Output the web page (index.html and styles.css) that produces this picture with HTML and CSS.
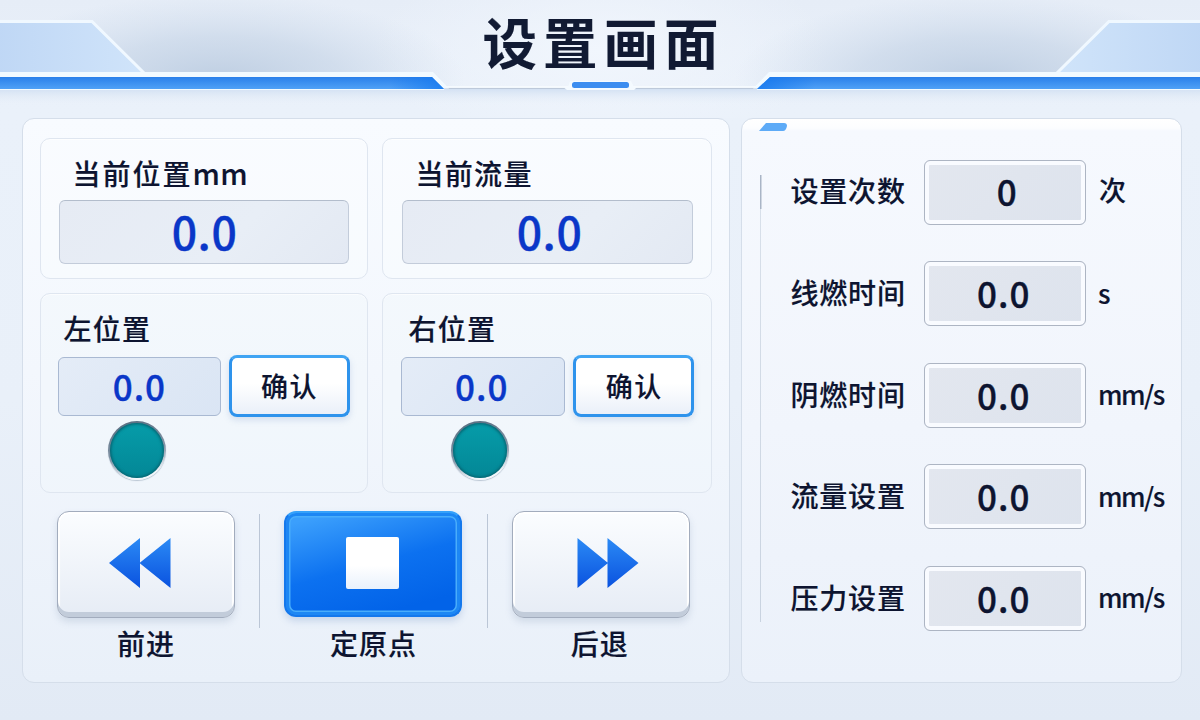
FILE: index.html
```html
<!DOCTYPE html>
<html lang="zh-CN">
<head>
  <meta charset="UTF-8" />
  <meta name="viewport" content="width=device-width, initial-scale=1.0" />
  <title>设置画面</title>
  <link rel="stylesheet" href="styles.css">
</head>
<body>
  <header class="header">
    <svg class="header-bg" viewBox="0 0 1200 118" width="1200" height="118" aria-hidden="true">
      <defs>
        <linearGradient id="bar" x1="0" y1="0" x2="0" y2="1">
          <stop offset="0" stop-color="#2a80ea" />
          <stop offset="1" stop-color="#50a1f6" />
        </linearGradient>
        <linearGradient id="tipLeft" x1="0" y1="0" x2="1" y2="0">
          <stop offset="0" stop-color="#1478ef" stop-opacity="0" />
          <stop offset="1" stop-color="#1478ef" stop-opacity="0.8" />
        </linearGradient>
        <linearGradient id="tipRight" x1="1" y1="0" x2="0" y2="0">
          <stop offset="0" stop-color="#1478ef" stop-opacity="0" />
          <stop offset="1" stop-color="#1478ef" stop-opacity="0.8" />
        </linearGradient>
        <linearGradient id="wingLeft" x1="0" y1="0" x2="1" y2="0">
          <stop offset="0" stop-color="#bfd7f5" />
          <stop offset="1" stop-color="#d0e4fa" />
        </linearGradient>
        <linearGradient id="wingRight" x1="1" y1="0" x2="0" y2="0">
          <stop offset="0" stop-color="#bfd7f5" />
          <stop offset="1" stop-color="#d0e4fa" />
        </linearGradient>
        <radialGradient id="shade">
          <stop offset="0" stop-color="#b9cadf" stop-opacity="0.9" />
          <stop offset="0.5" stop-color="#bfcfe3" stop-opacity="0.55" />
          <stop offset="1" stop-color="#c9d7e9" stop-opacity="0" />
        </radialGradient>
        <linearGradient id="drop" x1="0" y1="0" x2="0" y2="1">
          <stop offset="0" stop-color="#d3e1f3" />
          <stop offset="1" stop-color="#e9f0f9" stop-opacity="0" />
        </linearGradient>
        <clipPath id="top"><rect width="1200" height="86" /></clipPath>
      </defs>
      <g clip-path="url(#top)">
        <ellipse cx="220" cy="80" rx="245" ry="86" fill="url(#shade)" />
        <ellipse cx="980" cy="80" rx="245" ry="86" fill="url(#shade)" />
      </g>
      <rect y="89" width="1200" height="16" fill="url(#drop)" />
      <path d="M-4 21.5H92L145 74H-4Z" fill="url(#wingLeft)" stroke="#f0f8ff" stroke-width="3" />
      <path d="M1204 21.5H1109L1056 74H1204Z" fill="url(#wingRight)" stroke="#f0f8ff" stroke-width="3" />
      <path d="M440 88.300H762" stroke="#bdc9da" stroke-width="1.2" />
      <path d="M440 87H762" stroke="#f8fcff" stroke-width="1.4" />
      <path d="M0 72H433L449 88.5H444V90H0Z" fill="#f2faff" />
      <path d="M1200 72H769L753 88.5H757V90H1200Z" fill="#f2faff" />
      <path d="M0 77H432L444 89H0Z" fill="url(#bar)" />
      <path d="M1200 77H770L757 89H1200Z" fill="url(#bar)" />
      <path d="M390 77H432L444 89H390Z" fill="url(#tipLeft)" />
      <path d="M815 77H770L757 89H815Z" fill="url(#tipRight)" />
      <path d="M563 87H568L570 81H631L634 87H637L634 90H567Z" fill="#f4faff" />
      <rect x="572" y="82" width="57" height="6" rx="2.5" fill="#3c8df0" />
    </svg>
    <h1>设置画面</h1>
  </header>

  <main class="container">
    <section class="panel control-panel">
      <div class="cards">
        <div class="card readout">
          <h2>当前位置<span class="latin">mm</span></h2>
          <div class="value large">0.0</div>
        </div>
        <div class="card readout">
          <h2>当前流量</h2>
          <div class="value large">0.0</div>
        </div>
        <div class="card position">
          <h2>左位置</h2>
          <div class="position-row">
            <div class="value">0.0</div>
            <button class="confirm">确认</button>
          </div>
          <span class="lamp"></span>
        </div>
        <div class="card position">
          <h2>右位置</h2>
          <div class="position-row">
            <div class="value">0.0</div>
            <button class="confirm">确认</button>
          </div>
          <span class="lamp"></span>
        </div>
      </div>

      <div class="actions">
        <div class="action">
          <button class="key" aria-label="前进">
            <svg width="62" height="52" viewBox="0 0 62 52">
              <defs>
                <linearGradient id="arrow" x1="0" y1="0" x2="0" y2="1">
                  <stop offset="0" stop-color="#2b8af5" />
                  <stop offset="1" stop-color="#0a52df" />
                </linearGradient>
              </defs>
              <path d="M0 26L31 1V51ZM30.500 26L61.500 1V51Z" fill="url(#arrow)" />
            </svg>
          </button>
          <span>前进</span>
        </div>
        <i class="divider"></i>
        <div class="action">
          <button class="key stop" aria-label="定原点"><i class="square"></i></button>
          <span>定原点</span>
        </div>
        <i class="divider"></i>
        <div class="action">
          <button class="key" aria-label="后退">
            <svg width="62" height="52" viewBox="0 0 62 52">
              <path d="M31 26L0.500 1V51ZM61.500 26L30.500 1V51Z" fill="url(#arrow)" />
            </svg>
          </button>
          <span>后退</span>
        </div>
      </div>
    </section>

    <section class="panel settings-panel">
      <svg class="tab" width="28" height="8" viewBox="0 0 28 8" aria-hidden="true">
        <path d="M0 8L7 0H25Q28 0 28 3Q27 8 24 8Z" fill="#5eabf7" />
      </svg>
      <div class="settings">
        <div class="setting">
          <label>设置次数</label>
          <div class="field count">0</div>
          <span class="unit">次</span>
        </div>
        <div class="setting">
          <label>线燃时间</label>
          <div class="field">0.0</div>
          <span class="unit latin">s</span>
        </div>
        <div class="setting">
          <label>阴燃时间</label>
          <div class="field">0.0</div>
          <span class="unit latin">mm/s</span>
        </div>
        <div class="setting">
          <label>流量设置</label>
          <div class="field">0.0</div>
          <span class="unit latin">mm/s</span>
        </div>
        <div class="setting">
          <label>压力设置</label>
          <div class="field">0.0</div>
          <span class="unit latin">mm/s</span>
        </div>
      </div>
    </section>
  </main>
</body>
</html>
```
FILE: styles.css
```css
:root {
  --ink: #0d1430;
  --value-blue: #0a37c8;
  --line: #d5deea;
}
* {
  box-sizing: border-box;
}
html, body {
  margin: 0;
  width: 1200px;
  height: 720px;
  overflow: hidden;
}
body {
  font-family: "Noto Sans CJK SC", "Noto Sans", sans-serif;
  font-weight: 500;
  -webkit-text-stroke: 0.15px currentColor;
  color: var(--ink);
  background: linear-gradient(180deg, #e6edf7 0, #eaf1fa 110px, #e9f0f9 400px, #e2eaf5 720px);
}
h1, h2 {
  margin: 0;
}
button {
  padding: 0;
  font: inherit;
  color: inherit;
  cursor: pointer;
}

/* header */
.header {
  position: relative;
  height: 118px;
  background: radial-gradient(ellipse 230px 100px at 600px 50px, #f1f6fd 0, rgba(241, 246, 253, 0) 100%);
}
.header-bg {
  position: absolute;
  left: 0;
  top: 0;
}
h1 {
  position: relative;
  padding-left: 7px;
  font-size: 54.500px;
  font-weight: 700;
  line-height: 82px;
  letter-spacing: 6px;
  text-align: center;
  color: #111a33;
}

/* panels */
.container {
  display: grid;
  grid-template-columns: 708px 441px;
  gap: 11px;
  height: 565px;
  padding-left: 21.500px;
}
.panel {
  border: 1px solid var(--line);
  border-radius: 12px;
  background: linear-gradient(180deg, #f8fbff 0, #f3f7fd 45%, #e9f0f9 100%);
}
.control-panel {
  padding: 19px 17px 0;
}
.cards {
  display: grid;
  grid-template-columns: 328px 330px;
  grid-template-rows: 141px 200px;
  gap: 14px;
}
.card {
  border: 1px solid #dfe6f0;
  border-radius: 10px;
  background: rgba(250, 252, 255, 0.45);
  box-shadow: inset 0 1px 0 rgba(255, 255, 255, 0.6);
}
.position {
  background: rgba(243, 247, 252, 0.3);
}
.card h2 {
  height: 34px;
  font-size: 28px;
  font-weight: 500;
  letter-spacing: 1.300px;
  line-height: 34px;
}
.readout {
  padding: 17px 18px 0;
}
.readout h2 {
  padding-left: 14px;
  margin-bottom: 9.500px;
  letter-spacing: 2px;
}
.readout h2 .latin {
  letter-spacing: 0.500px;
  font-size: 29px;
  line-height: 1;
}
.readout:nth-child(2) {
  padding-left: 19px;
}
.readout:nth-child(2) h2 {
  letter-spacing: 1.300px;
}
.value {
  display: flex;
  align-items: center;
  justify-content: center;
  width: 165px;
  height: 59px;
  border: 1px solid #a9b9d2;
  border-radius: 6px;
  background: linear-gradient(135deg, #e4ecf7, #dae5f4);
  color: var(--value-blue);
  -webkit-text-stroke-width: 0.35px;
  font-size: 35px;
  letter-spacing: 1px;
  padding-bottom: 2px;
}
.value.large {
  width: 290px;
  height: 64px;
  border-color: #c3ccda;
  border-top-color: #b3bdcc;
  background: linear-gradient(135deg, #e6ebf4, #e8eef6 60%, #e3e9f3);
  font-size: 44.500px;
  letter-spacing: 0.500px;
  padding: 0 0 2px 2px;
}
.readout:nth-child(2) .large {
  width: 291px;
  padding-left: 5px;
}
.position {
  padding: 17px 17px 0;
}
.position h2 {
  padding-left: 6px;
  margin-bottom: 10px;
}
.position:nth-child(4) {
  padding-left: 18px;
}
.position:nth-child(4) h2 {
  padding-left: 8px;
}
.position:nth-child(4) .value {
  padding-right: 2px;
}
.position-row {
  display: flex;
  align-items: center;
  gap: 8px;
}
.confirm {
  width: 121px;
  height: 62px;
  padding-bottom: 1px;
  border: 3px solid #2e93ec;
  border-top-color: #3fa4f3;
  border-radius: 8px;
  background: linear-gradient(180deg, #ffffff 45%, #eaf0f9);
  box-shadow: 0 3px 6px rgba(120, 150, 200, 0.25);
  font-size: 27px;
  letter-spacing: 1.500px;
}
.position:nth-child(4) .confirm {
  padding-left: 2px;
}
.lamp {
  display: block;
  width: 58px;
  height: 59px;
  margin: 4px 0 0 50px;
  border: 2px solid transparent;
  border-radius: 50%;
  background:
    linear-gradient(180deg, #069ca9, #038796) padding-box,
    linear-gradient(165deg, #5c7184 10%, #8496a8 55%, #f2f6fa 85%) border-box;
  box-shadow: inset 0 0 3px 1px #075e6b, 0 1px 1px #b9c5d2;
}

/* bottom keys */
.actions {
  display: flex;
  gap: 24.300px;
  padding: 18px 0 0 17.500px;
}
.action {
  display: flex;
  flex-direction: column;
  align-items: center;
  width: 178px;
  font-size: 28px;
  letter-spacing: 1px;
  line-height: 36px;
}
.action span {
  margin-top: 7px;
}
.action:last-child span {
  padding-right: 3px;
}
.key {
  display: flex;
  align-items: center;
  justify-content: center;
  width: 178px;
  height: 107px;
  padding: 0 13px 3px 0;
  border: 1.500px solid #a2acbd;
  border-radius: 12px;
  background: linear-gradient(180deg, #fbfdff, #e6ecf5);
  box-shadow: inset 0 -5px 0 #c2ccda, inset 2px 0 1px #ffffff, inset -2px 0 1px #ffffff, inset 0 2px 1px #ffffff, 0 4px 7px rgba(120, 140, 175, 0.22);
}
.action:last-child .key {
  padding: 0 0 3px 13px;
}
.key.stop {
  height: 106px;
  margin: 0 1px 1px 0;
  padding: 0 2px 3px 0;
  border: 2px solid #1478ec;
  border-top-color: #35a1fa;
  background: linear-gradient(165deg, #3b9ffc 8%, #0c71f0 50%, #0263e8 85%);
  box-shadow: inset 0 0 0 3px #1d87f4, inset 0 0 0 4.500px #49adfb, 0 4px 7px rgba(90, 130, 190, 0.25);
}
.square {
  width: 53px;
  height: 52px;
  border-radius: 2px;
  background: linear-gradient(180deg, #ffffff 55%, #e9f1fc);
}
.divider {
  flex: none;
  width: 1px;
  height: 114px;
  margin-top: 3px;
  background: #bbc6d6;
}

/* settings */
.settings-panel {
  position: relative;
  padding: 41px 0 0 18px;
  background: linear-gradient(180deg, #ffffff 0, #fcfdff 9px, #f6f9fe 12px, #f1f5fc 55%, #ebf1fa 100%);
}
.tab {
  position: absolute;
  left: 17px;
  top: 4px;
}
.settings {
  display: grid;
  grid-template-rows: repeat(5, 65px);
  row-gap: 36.400px;
  padding-left: 31px;
  background:
    linear-gradient(#a9b5c6, #a9b5c6) 0 15px / 1.500px 34px no-repeat,
    linear-gradient(#d8e0ea, #c9d3e0) 0 49px / 1px 413px no-repeat;
}
.setting {
  display: grid;
  grid-template-columns: 133px 162.500px 1fr;
  align-items: center;
  font-size: 28px;
  line-height: 36px;
}
.setting label {
  letter-spacing: 0.800px;
  margin-top: -3px;
}
.setting:first-child label {
  margin-top: -6px;
}
.field {
  display: flex;
  align-items: center;
  justify-content: center;
  height: 65px;
  border: 1.500px solid #adb5c3;
  border-radius: 6px;
  background: linear-gradient(135deg, #e3e7ef, #dde3ed);
  box-shadow: inset 0 0 0 4px #f9fbff;
  -webkit-text-stroke-width: 0.35px;
  font-size: 35px;
  letter-spacing: 1px;
  padding: 0 2px 1px 0;
}
.field.count {
  padding: 0 0 3px 5px;
}
.unit {
  padding-left: 13px;
  font-size: 27px;
  margin-top: -5px;
}
.unit.latin {
  padding-left: 12px;
  font-size: 26px;
  letter-spacing: -1.500px;
  margin-top: -2px;
}
```
